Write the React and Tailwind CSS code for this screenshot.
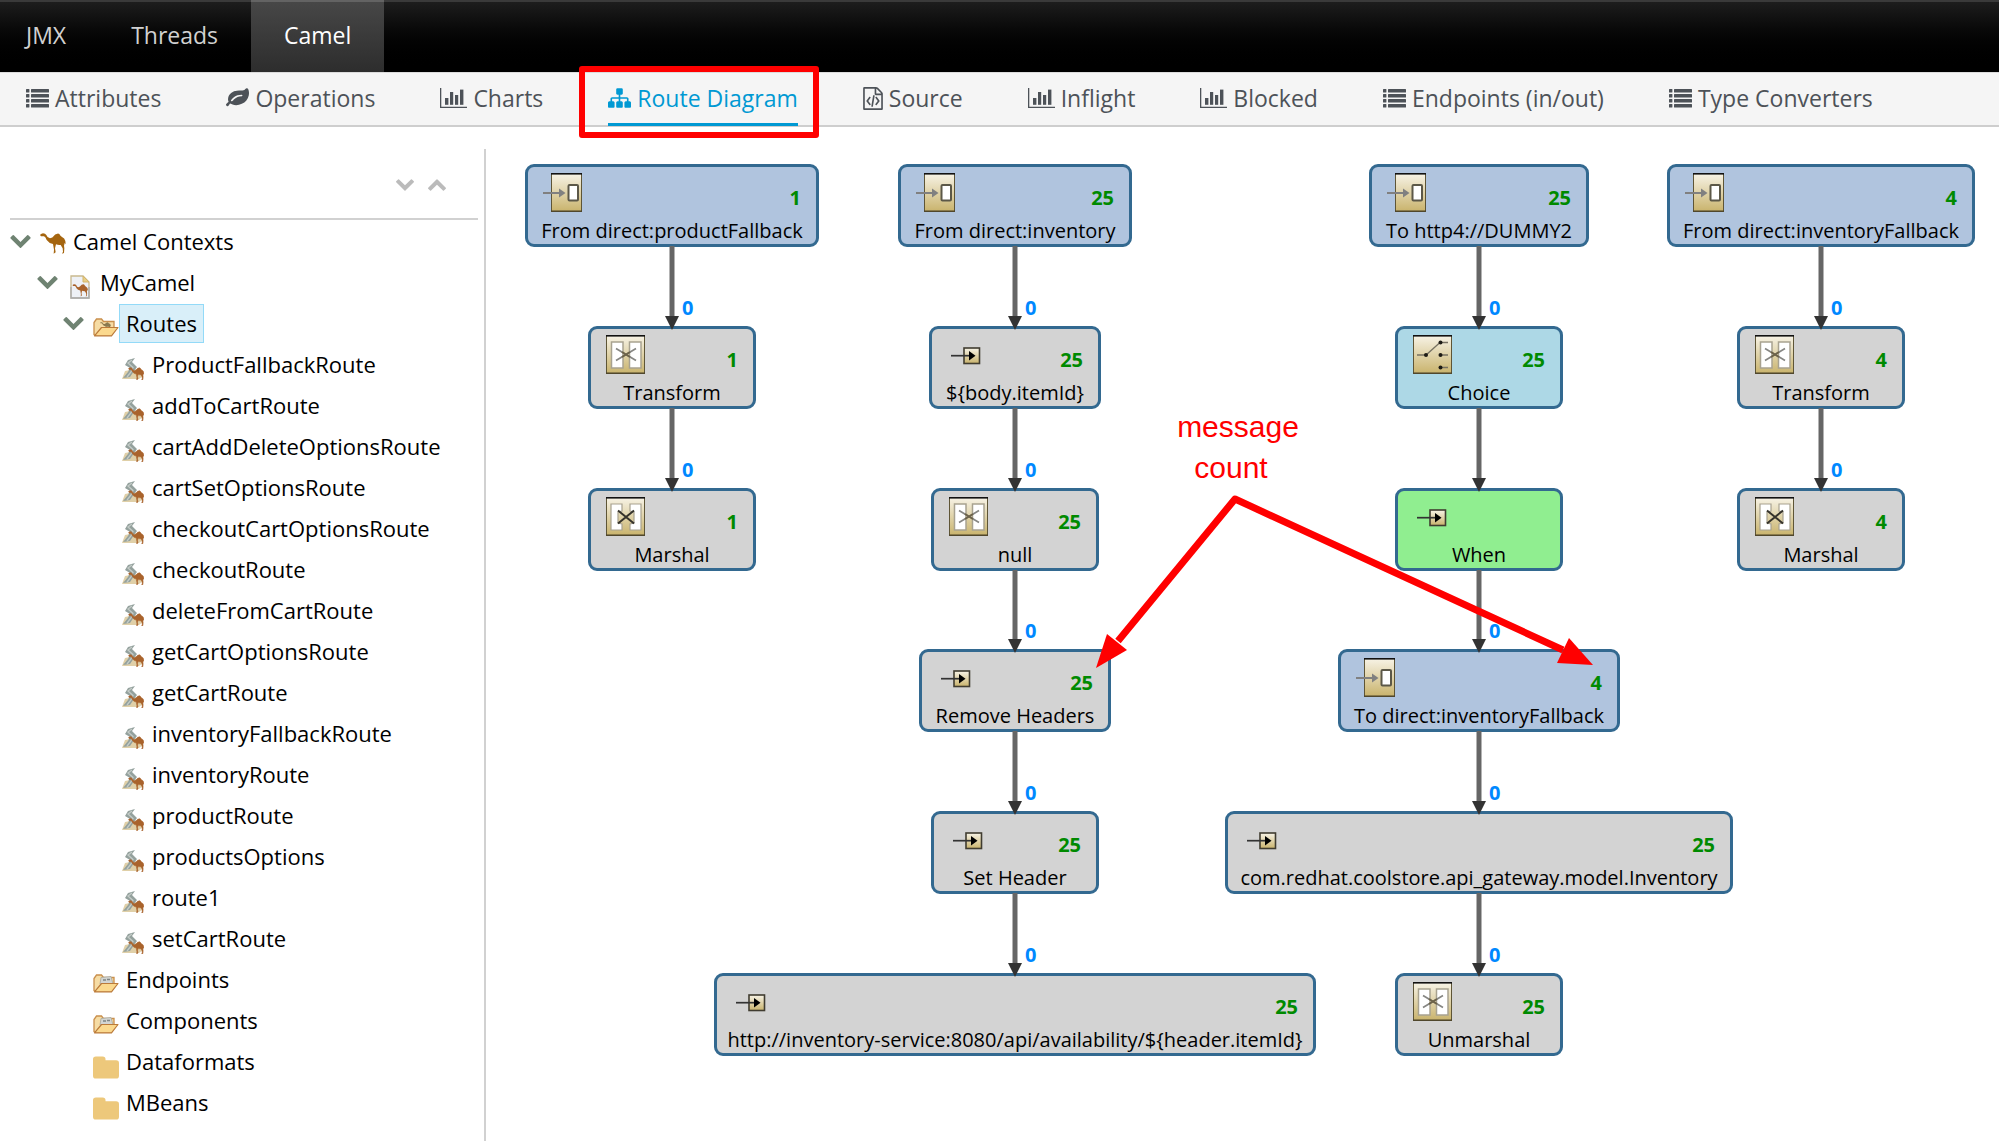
import React from "react";

const LEAF =
  "M1280 704q0-26-19-45t-45-19q-172 0-318 49.5t-259.5 134-235.5 219.5q-19 21-19 45 0 26 19 45t45 19q24 0 45-19 27-24 74-71t67-66q137-124 268.5-176t313.5-52q26 0 45-19t19-45zm512-198q0 95-20 193-46 224-184.5 383t-357.5 268q-214 108-438 108-148 0-286-47-15-5-88-42t-96-37q-16 0-39.5 32t-45 70-52.5 70-60 32q-43 0-63.5-17.5t-45.5-59.5q-2-4-6-11t-5.5-10-3-9.5-1.5-13.5q0-35 31-73.5t68-65.5 68-56 31-48q0-4-14-38t-16-44q-9-51-9-104 0-115 43.5-220t119-184.5 170.5-139 204-95.5q55-18 145-25.5t179.5-9 178.5-6 163.5-24 113.5-56.5l29.5-29.5 29.5-28 27-20 36.5-16 43.5-4.5q39 0 70.5 46t47.5 112 24 124 8 96z";
const SITEMAP =
  "M1792 1248v320q0 40-28 68t-68 28h-320q-40 0-68-28t-28-68v-320q0-40 28-68t68-28h96v-192h-512v192h96q40 0 68 28t28 68v320q0 40-28 68t-68 28h-320q-40 0-68-28t-28-68v-320q0-40 28-68t68-28h96v-192h-512v192h96q40 0 68 28t28 68v320q0 40-28 68t-68 28h-320q-40 0-68-28t-28-68v-320q0-40 28-68t68-28h96v-192q0-52 38-90t90-38h512v-192h-96q-40 0-68-28t-28-68v-320q0-40 28-68t68-28h320q40 0 68 28t28 68v320q0 40-28 68t-68 28h-96v192h512q52 0 90 38t38 90v192h96q40 0 68 28t28 68z";
const FILE_CODE =
  "M1596 380q28 28 48 76t20 88v1152q0 40-28 68t-68 28h-1344q-40 0-68-28t-28-68v-1600q0-40 28-68t68-28h896q40 0 88 20t76 48zm-444-244v376h376q-10-29-22-41l-313-313q-12-12-41-22zm384 1528v-1024h-416q-40 0-68-28t-28-68v-416h-768v1536h1280zm-928-896q8-11 21-12.5t24 6.5l51 38q11 8 12.5 21t-6.5 24l-182 243 182 243q8 11 6.5 24t-12.5 21l-51 38q-11 8-24 6.5t-21-12.5l-226-301q-14-19 0-38zm802 301q14 19 0 38l-226 301q-8 11-21 12.5t-24-6.5l-51-38q-11-8-12.5-21t6.5-24l182-243-182-243q-8-11-6.5-24t12.5-21l51-38q11-8 24-6.5t21 12.5zm-620 461q-13-2-20.5-13t-5.5-24l138-831q2-13 13-20.5t24-5.5l63 10q13 2 20.5 13t5.5 24l-138 831q-2 13-13 20.5t-24 5.5z";
const CHEVRON =
  "M1683 808l-742 741q-19 19-45 19t-45-19l-742-741q-19-19-19-45.5t19-45.5l166-165q19-19 45-19t45 19l531 531 531-531q19-19 45-19t45 19l166 165q19 19 19 45.5t-19 45.5z";
const CAMEL =
  "M0 6L3 3L9 1L15 2L19 6Q22 15 30 16Q38 14 42 8Q45 3 50 3Q54 0 58 3Q61 9 66 12Q74 15 76 24L77 34L74 30L72 38L73 46L72 60L66 62L69 56L68 46L62 36Q54 37 48 34L45 46L47 58L41 62L42 50L39 33Q26 30 20 21Q17 12 12 10L3 10Z";

/* ---------- toolbar icons ---------- */

function ListIcon() {
  return (
    <svg viewBox="0 0 23 19" className="h-[19px] w-[23px]" fill="currentColor">
      {[0, 5, 10, 15].map((y) => (
        <g key={y}>
          <rect x="0" y={y} width="3.4" height="3.6" rx=".5" />
          <rect x="5" y={y} width="18" height="3.6" rx=".5" />
        </g>
      ))}
    </svg>
  );
}

function ChartIcon() {
  return (
    <svg viewBox="0 0 27 20" className="h-[20px] w-[27px]" fill="currentColor">
      <path d="M0 0h1.300v18.700H27V20H0z" />
      <rect x="5" y="10" width="3.4" height="6.8" />
      <rect x="10" y="4" width="3.2" height="12.8" />
      <rect x="15" y="7" width="3.2" height="9.8" />
      <rect x="20" y="1.6" width="3.4" height="15.2" />
    </svg>
  );
}

function LeafIcon() {
  return (
    <svg viewBox="0 128 1792 1536" className="h-[20px] w-[23px]" fill="currentColor">
      <path d={LEAF} />
    </svg>
  );
}

function SitemapIcon() {
  return (
    <svg viewBox="0 128 1792 1536" className="h-[20px] w-[23px]" fill="currentColor">
      <path d={SITEMAP} />
    </svg>
  );
}

function FileCodeIcon() {
  return (
    <svg viewBox="128 0 1536 1792" className="h-[23px] w-[20px]" fill="currentColor">
      <path d={FILE_CODE} />
    </svg>
  );
}

function Chevron({ className }) {
  return (
    <svg viewBox="90 533 1612 1035" className={className} fill="currentColor">
      <path d={CHEVRON} />
    </svg>
  );
}

/* ---------- tree icons ---------- */

function CamelIcon() {
  return (
    <svg viewBox="0 0 78 63" className="mt-1 h-[21px] w-[26px]">
      <path d={CAMEL} fill="#a5650f" />
    </svg>
  );
}

function ContextIcon() {
  return (
    <svg viewBox="0 0 20 24" className="mt-2 h-[24px] w-[20px]">
      <path d="M1 1h12l6 6v16H1z" fill="#eef1f6" stroke="#c9b98e" strokeWidth="1.3" />
      <path d="M1 12v11h18V12" fill="none" stroke="#a9acb2" strokeWidth="1.3" />
      <path d="M13 1v6h6z" fill="#e9cf86" stroke="#d3b56c" strokeWidth="1" />
      <path d={CAMEL} transform="translate(2.5 9) scale(.2 .2)" fill="#a9632c" />
    </svg>
  );
}

function OpenFolderIcon({ camel }) {
  return (
    <svg viewBox="0 0 26 19" className="mt-2 h-[19px] w-[26px]">
      <path d="M1 16.500V4.500L3.500 1h5l2 2.500H21V9l-3 8H2z" fill="#f6dca4" stroke="#c98f4c" strokeWidth="1.300" />
      {camel ? (
        <path d={CAMEL} transform="translate(7 4) scale(.14 .13)" fill="#8a7a50" />
      ) : (
        <g>
          <path d="M8 3.500L18 2.500L20 10H7z" fill="#d3d5d2" stroke="#a7a89f" strokeWidth=".8" />
          <path d="M10 6h3M14 5.500h3" stroke="#7f8585" strokeWidth="1.300" />
        </g>
      )}
      <path d="M1.500 17.800L8.500 9.500H25L18.500 17.800z" fill="#fbd98e" stroke="#bb7a3a" strokeWidth="1.200" strokeLinejoin="round" />
    </svg>
  );
}

function FolderIcon() {
  return (
    <svg viewBox="0 0 27 23" className="mt-3 h-[23px] w-[27px]">
      <path d="M3 0h7q3 0 3 3v1h11q3 0 3 3v13q0 3-3 3H3q-3 0-3-3V3q0-3 3-3z" fill="#edc87b" />
    </svg>
  );
}

function RouteIcon() {
  return (
    <svg viewBox="0 0 22 22" className="mt-2 h-[22px] w-[22px]">
      <path d="M3 13L13 11L21 18L17 21L0 21z" fill="#e0d0a8" />
      <path d="M6 2L13 0L10 4L15 9L12 13L8 19L1 20L6 14L8 10L3 7z" fill="#94a19d" />
      <path d="M10 2L6 5L11 9.500L9 14L5 19" fill="none" stroke="#c3cbc7" strokeWidth="1.300" />
      <path d={CAMEL} transform="translate(6.500 9.500) scale(.2 .2)" fill="#a9632c" stroke="#a9632c" strokeWidth="3" />
    </svg>
  );
}

/* ---------- node icons ---------- */

const Shade = () => (
  <defs>
    <linearGradient id="gold" x1="0" y1="0" x2="0" y2="1">
      <stop offset="0" stopColor="#f7f3e6" />
      <stop offset="1" stopColor="#c9b36c" />
    </linearGradient>
  </defs>
);

function Frame({ x, w }) {
  return (
    <g>
      <rect x={x + 0.5} y="1.5" width={w - 1} height="38" fill="url(#gold)" stroke="#5e5536" />
      <rect x={x} y="1" width={w} height="1.600" fill="#111" />
      <rect x={x} y="38.500" width={w} height="1.200" fill="#4a4228" />
    </g>
  );
}

function EndpointGlyph() {
  return (
    <g>
      <Frame x={8} w={31} />
      <path d="M0 21h17" stroke="#808080" strokeWidth="2" />
      <path d="M16 16.500L22.500 21L16 25.500z" fill="#808080" />
      <rect x="25.500" y="13" width="9.500" height="15.500" rx="1" fill="#fff" stroke="#5c5848" strokeWidth="2" />
    </g>
  );
}

function TransformGlyph() {
  return (
    <g>
      <Frame x={0} w={39} />
      <rect x="5.500" y="8" width="11.500" height="26" fill="#fff" stroke="#a8a290" strokeWidth="1.500" />
      <rect x="23.500" y="8" width="11.500" height="26" fill="#fff" stroke="#a8a290" strokeWidth="1.500" />
      <path d="M10 14.500L30 26.500M10 26.500L30 14.500" stroke="#868683" strokeWidth="1.700" />
      <path d="M16 18L24 23M16 23L24 18" stroke="#6d6348" strokeWidth="1.700" />
    </g>
  );
}

function MarshalGlyph() {
  return (
    <g>
      <Frame x={0} w={39} />
      <path d="M5 8h11v7l-4 1v11l4 1v6H5z" fill="#fff" stroke="#a8a290" strokeWidth="1.200" />
      <path d="M24 8h11v26H24v-6l4-1V16l-4-1z" fill="#fff" stroke="#a8a290" strokeWidth="1.200" />
      <path d="M12 14.500L28 27.500M12 27.500L28 14.500" stroke="#35332c" strokeWidth="2" />
    </g>
  );
}

function ChoiceGlyph() {
  return (
    <g>
      <Frame x={0} w={39} />
      <path d="M4 21h9L27 8.500M27 8.500h8M27 21h8M27 33.500h8" fill="none" stroke="#777262" strokeWidth="1.300" />
      {[[13, 21], [27.5, 8.5], [27.5, 21], [27.5, 33.5]].map(([x, y]) => (
        <circle key={`${x}-${y}`} cx={x} cy={y} r="2" fill="#1d1b15" />
      ))}
    </g>
  );
}

function GenericGlyph() {
  return (
    <g>
      <rect x="17" y="14" width="15.500" height="15.500" fill="url(#gold)" stroke="#403c30" strokeWidth="1.600" />
      <path d="M4 21.700h19" stroke="#333" strokeWidth="1.700" />
      <path d="M22 17L28.500 21.700L22 26.500z" fill="#000" />
    </g>
  );
}

const GLYPHS = {
  endpoint: EndpointGlyph,
  transform: TransformGlyph,
  marshal: MarshalGlyph,
  choice: ChoiceGlyph,
  generic: GenericGlyph,
};

/* ---------- data ---------- */

const TABS = [
  { label: "Attributes", icon: ListIcon },
  { label: "Operations", icon: LeafIcon },
  { label: "Charts", icon: ChartIcon },
  { label: "Route Diagram", icon: SitemapIcon, active: true },
  { label: "Source", icon: FileCodeIcon },
  { label: "Inflight", icon: ChartIcon },
  { label: "Blocked", icon: ChartIcon },
  { label: "Endpoints (in/out)", icon: ListIcon },
  { label: "Type Converters", icon: ListIcon },
];

const ROUTES = [
  "ProductFallbackRoute",
  "addToCartRoute",
  "cartAddDeleteOptionsRoute",
  "cartSetOptionsRoute",
  "checkoutCartOptionsRoute",
  "checkoutRoute",
  "deleteFromCartRoute",
  "getCartOptionsRoute",
  "getCartRoute",
  "inventoryFallbackRoute",
  "inventoryRoute",
  "productRoute",
  "productsOptions",
  "route1",
  "setCartRoute",
];

const ROW_TOP = [37, 199, 361, 522, 684, 846];
const NODE_HEIGHT = 83;

const COLUMNS = [
  {
    center: 186,
    nodes: [
      { label: "From direct:productFallback", count: 1, icon: "endpoint", width: 294, fill: "bg-[#b0c4de]" },
      { label: "Transform", count: 1, icon: "transform", width: 168, edge: "0" },
      { label: "Marshal", count: 1, icon: "marshal", width: 168, edge: "0" },
    ],
  },
  {
    center: 529,
    nodes: [
      { label: "From direct:inventory", count: 25, icon: "endpoint", width: 234, fill: "bg-[#b0c4de]" },
      { label: "${body.itemId}", count: 25, icon: "generic", width: 172, edge: "0" },
      { label: "null", count: 25, icon: "transform", width: 168, edge: "0" },
      { label: "Remove Headers", count: 25, icon: "generic", width: 192, edge: "0" },
      { label: "Set Header", count: 25, icon: "generic", width: 168, edge: "0" },
      {
        label: "http://inventory-service:8080/api/availability/${header.itemId}",
        count: 25,
        icon: "generic",
        width: 602,
        edge: "0",
      },
    ],
  },
  {
    center: 993,
    nodes: [
      { label: "To http4://DUMMY2", count: 25, icon: "endpoint", width: 220, fill: "bg-[#b0c4de]" },
      { label: "Choice", count: 25, icon: "choice", width: 168, fill: "bg-[#add8e6]", edge: "0" },
      { label: "When", icon: "generic", width: 168, fill: "bg-[#90ee90]" },
      { label: "To direct:inventoryFallback", count: 4, icon: "endpoint", width: 282, fill: "bg-[#b0c4de]", edge: "0" },
      { label: "com.redhat.coolstore.api_gateway.model.Inventory", count: 25, icon: "generic", width: 508, edge: "0" },
      { label: "Unmarshal", count: 25, icon: "transform", width: 168, edge: "0" },
    ],
  },
  {
    center: 1335,
    nodes: [
      { label: "From direct:inventoryFallback", count: 4, icon: "endpoint", width: 308, fill: "bg-[#b0c4de]" },
      { label: "Transform", count: 4, icon: "transform", width: 168, edge: "0" },
      { label: "Marshal", count: 4, icon: "marshal", width: 168, edge: "0" },
    ],
  },
];

/* ---------- parts ---------- */

function MainNav() {
  return (
    <nav className="flex h-[72px] border-t-2 border-[#3a3a3a] bg-linear-to-b from-[#1d1d1d] to-black text-[23px] leading-[66px] text-[#d1d1d1]">
      <a href="#jmx" className="pr-[32px] pl-[26px]">JMX</a>
      <a href="#threads" className="px-[33px]">Threads</a>
      <a
        href="#camel"
        aria-current="page"
        className="-mt-[2px] border-t-2 border-[#636363] bg-linear-to-b from-[#474747] to-[#2d2d2d] px-[33px] text-white"
      >
        Camel
      </a>
    </nav>
  );
}

function TabBar() {
  return (
    <nav className="border-t border-b-2 border-t-[#dcdcdc] border-b-[#cecece] bg-[#f5f5f5]">
      <ul className="flex gap-[65px] pl-[26px] text-[23px] leading-[50px] whitespace-nowrap text-[#4d5258]">
        {TABS.map(({ label, icon: Icon, active }) => (
          <li key={label} className="relative">
            <a
              href="#tab"
              className={
                active
                  ? "-mb-px flex h-[53px] items-center gap-[6px] border-b-3 border-[#0099d3] text-[#0099d3]"
                  : "flex h-[52px] items-center gap-[6px] pb-[2px]"
              }
            >
              <Icon />
              {label}
            </a>
            {active && (
              <span className="pointer-events-none absolute -top-[7px] -right-[21px] -left-[29px] z-10 h-[72px] rounded-[3px] border-6 border-[#ff0000]" />
            )}
          </li>
        ))}
      </ul>
    </nav>
  );
}

function TreeRow({ indent, icon, label, open, selected, gap = "w-[26px]" }) {
  return (
    <li className={`flex h-[41px] items-center ${indent}`}>
      {open && (
        <button aria-label={`Collapse ${label}`} className="mr-[9px] text-[#6f8372]">
          <Chevron className="h-[13px] w-[21px]" />
        </button>
      )}
      <span className={`flex shrink-0 justify-start ${gap}`}>{icon}</span>
      <button
        className={
          selected
            ? "h-[39px] border border-[#93daf8] bg-[#d9eff9] px-[6px] leading-[37px]"
            : "h-[39px] border border-transparent px-[6px] leading-[37px]"
        }
      >
        {label}
      </button>
    </li>
  );
}

function Sidebar() {
  return (
    <aside className="mt-[22px] w-[486px] shrink-0 border-r-2 border-[#d1d1d1] pl-[10px] text-[22px] text-black">
      <div className="mr-[6px] flex h-[71px] justify-end gap-[14px] border-b-2 border-[#d1d1d1] pt-[30px] pr-[32px] text-[#bbbbbb]">
        <button aria-label="Expand all" className="h-[12px]">
          <Chevron className="h-[12px] w-[18px]" />
        </button>
        <button aria-label="Collapse all" className="h-[12px]">
          <Chevron className="h-[12px] w-[18px] rotate-180" />
        </button>
      </div>
      <ul className="pt-px">
        <TreeRow indent="" open icon={<CamelIcon />} label="Camel Contexts" />
        <TreeRow indent="pl-[27px]" open icon={<span className="pl-[3px]"><ContextIcon /></span>} label="MyCamel" />
        <TreeRow indent="pl-[53px]" open selected icon={<OpenFolderIcon camel />} label="Routes" />
        {ROUTES.map((r) => (
          <TreeRow key={r} indent="pl-[112px]" gap="w-[23px]" icon={<RouteIcon />} label={r} />
        ))}
        <TreeRow indent="pl-[83px]" icon={<OpenFolderIcon />} label="Endpoints" />
        <TreeRow indent="pl-[83px]" icon={<OpenFolderIcon />} label="Components" />
        <TreeRow indent="pl-[83px]" icon={<FolderIcon />} label="Dataformats" />
        <TreeRow indent="pl-[83px]" icon={<FolderIcon />} label="MBeans" />
      </ul>
    </aside>
  );
}

function Node({ node, center, top }) {
  const Glyph = GLYPHS[node.icon];
  return (
    <div
      className={`absolute h-[83px] rounded-[9px] border-3 border-[#336990] text-[20px] text-black ${node.fill || "bg-[#d3d3d3]"}`}
      style={{ left: center - node.width / 2, top, width: node.width }}
    >
      <div className="flex h-[46px] justify-between px-[15px] pt-[5px]">
        <svg viewBox="0 0 40 40" className="h-[40px] w-[40px]">
          <Glyph />
        </svg>
        <span className="pt-[12px] leading-[28px] font-bold text-[#008a00]">{node.count}</span>
      </div>
      <div className="-mx-2 text-center leading-[36px] whitespace-nowrap">{node.label}</div>
    </div>
  );
}

function Edge({ center, from, to, label }) {
  const tip = to + 4;
  return (
    <g>
      <path d={`M${center} ${from}V${tip - 10}`} stroke="#666" strokeWidth="5" />
      <path d={`M${center - 7} ${tip - 14}h14L${center} ${tip}z`} fill="#333" />
      {label && (
        <text x={center + 10} y={tip - 15} fontSize="20" fontWeight="700" fill="#0088ff">
          {label}
        </text>
      )}
    </g>
  );
}

function RouteDiagram() {
  return (
    <main className="relative min-h-[1014px] flex-1">
      {COLUMNS.map(({ center, nodes }) =>
        nodes.map((node, i) => <Node key={`${center}-${i}`} node={node} center={center} top={ROW_TOP[i]} />)
      )}
      <svg className="pointer-events-none absolute inset-0 h-full w-full">
        <Shade />
        {COLUMNS.map(({ center, nodes }) =>
          nodes.slice(1).map((node, i) => (
            <Edge
              key={`${center}-${i}`}
              center={center}
              from={ROW_TOP[i] + NODE_HEIGHT - 1}
              to={ROW_TOP[i + 1]}
              label={node.edge}
            />
          ))
        )}
        <path d="M632 514L749 372L1077 523" fill="none" stroke="#ff0000" strokeWidth="7" strokeLinejoin="round" />
        <path d="M610 541L621 507L641 523z" fill="#ff0000" />
        <path d="M1107 538L1083 511L1071 536z" fill="#ff0000" />
      </svg>
      <p className="absolute top-[279px] left-[682px] w-[140px] text-center font-['Liberation_Sans',sans-serif] text-[30px] leading-[41px] text-[#ff0000]">
        message
        <br />
        <span className="pr-[14px]">count</span>
      </p>
    </main>
  );
}

export default function App() {
  return (
    <div className="flex min-h-screen flex-col overflow-hidden bg-white font-['Open_Sans',sans-serif]">
      <MainNav />
      <TabBar />
      <div className="flex flex-1">
        <Sidebar />
        <RouteDiagram />
      </div>
    </div>
  );
}
